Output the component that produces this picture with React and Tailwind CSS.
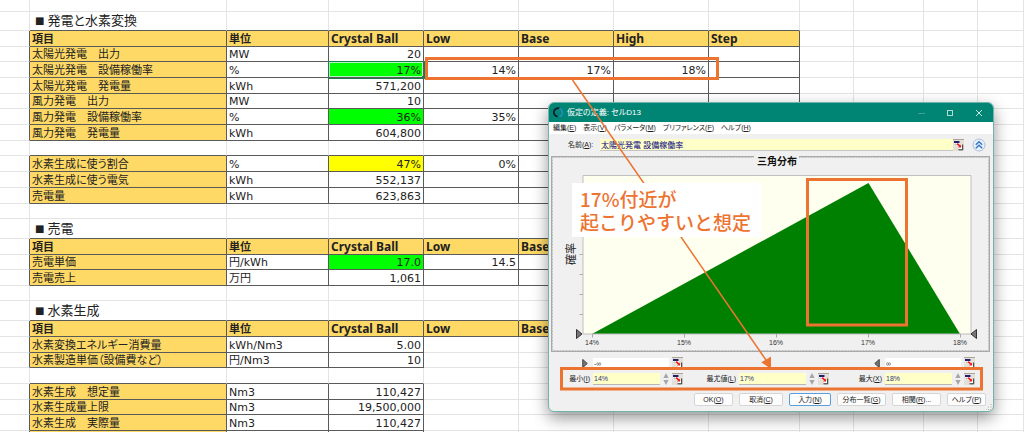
import React from "react";

const H15 = "h-[15px]";
const H16 = "h-[16px]";
const H20 = "h-[20px]";
const HEAD = ["項目", "単位", "Crystal Ball", "Low", "Base", "High", "Step"];

// boxed: number of columns, counted from the item column, that carry a dark frame
const ROWS = [
  { h: "h-[12px]" },
  { h: "h-[19px]", title: "発電と水素変換" },
  { h: H16, head: true, boxed: 7 },
  { h: H15, boxed: 7, cells: ["太陽光発電　出力", "MW", "20"] },
  { h: H16, boxed: 7, cells: ["太陽光発電　設備稼働率", "%", "17%", "14%", "17%", "18%"], fill: "green", selected: true },
  { h: H16, boxed: 7, cells: ["太陽光発電　発電量", "kWh", "571,200"] },
  { h: H15, boxed: 7, cells: ["風力発電　出力", "MW", "10"] },
  { h: H16, boxed: 7, cells: ["風力発電　設備稼働率", "%", "36%", "35%"], fill: "green" },
  { h: H16, boxed: 7, cells: ["風力発電　発電量", "kWh", "604,800"] },
  { h: H15 },
  { h: H16, boxed: 7, cells: ["水素生成に使う割合", "%", "47%", "0%"], fill: "yellow" },
  { h: H16, boxed: 7, cells: ["水素生成に使う電気", "kWh", "552,137"] },
  { h: H16, boxed: 7, cells: ["売電量", "kWh", "623,863"] },
  { h: H15 },
  { h: H20, title: "売電" },
  { h: H16, head: true, boxed: 7 },
  { h: H15, boxed: 7, cells: ["売電単価", "円/kWh", "17.0", "14.5"], fill: "green" },
  { h: H16, boxed: 7, cells: ["売電売上", "万円", "1,061"] },
  { h: H15 },
  { h: H20, title: "水素生成" },
  { h: H16, head: true, boxed: 7 },
  { h: H16, boxed: 3, cells: ["水素変換エネルギー消費量", "kWh/Nm3", "5.00"] },
  { h: H15, boxed: 3, cells: ["水素製造単価（設備費など）", "円/Nm3", "10"] },
  { h: H16 },
  { h: H16, boxed: 3, cells: ["水素生成　想定量", "Nm3", "110,427"] },
  { h: H15, boxed: 3, cells: ["水素生成量上限", "Nm3", "19,500,000"] },
  { h: H16, boxed: 3, cells: ["水素生成　実際量", "Nm3", "110,427"] },
  { h: H16, boxed: 3, cells: ["", "", ""] },
];

const COLS = [
  "w-[30px]", "w-[197px]", "w-[102px]", "w-[95px]", "w-[95px]", "w-[95px]",
  "w-[95px]", "w-[91px]", "w-[54px]", "w-[70px]", "w-[54px]", "",
];

const FILLS = { green: "bg-[#00ff00]", yellow: "bg-[#ffff00]" };

function isBoxed(row, col) {
  return Boolean(row && row.boxed) && col >= 1 && col <= row.boxed;
}

function Cell({ row, next, col }) {
  const self = isBoxed(row, col);
  const right = self || isBoxed(row, col + 1) ? "border-r-[#5a5a5a]" : "border-r-[#e4e4e4]";
  const bottom = self || isBoxed(next, col) ? "border-b-[#5a5a5a]" : "border-b-[#e4e4e4]";
  const base = `border-r border-b p-0 align-middle whitespace-nowrap ${right} ${bottom}`;

  if (row.title && col === 1) {
    return (
      <td className={`${base} pl-[5px]`}>
        <h2 className="flex items-center gap-[3px] text-[13px] leading-[18px]">
          <span className="text-[10px]">■</span>
          {row.title}
        </h2>
      </td>
    );
  }
  if (row.head && self) {
    const size = col <= 2 ? "text-[11px]" : "text-[12px]";
    return (
      <th scope="col" className={`${base} bg-[#ffd966] pl-[2px] text-left font-['Noto_Sans','Noto_Sans_CJK_JP',sans-serif] font-bold ${size}`}>
        {HEAD[col - 1]}
      </th>
    );
  }
  const text = row.cells && col >= 1 ? row.cells[col - 1] : undefined;
  if (self && col === 1) {
    return (
      <th scope="row" className={`${base} bg-[#ffd966] pt-px pl-[2px] text-left font-normal`}>
        {text}
      </th>
    );
  }
  if (self && col === 2) return <td className={`${base} pt-px pl-[2px]`}>{text}</td>;
  const fill = col === 3 && row.fill ? FILLS[row.fill] : "";
  if (col === 3 && row.selected) {
    return (
      <td className={`${base} ${fill} relative pt-px pr-[2px] text-right inset-ring inset-ring-[#b5f5c4] outline outline-1 outline-[#1f7a4d]`}>
        {text}
        <span className="absolute -right-[2px] -bottom-[2px] size-[3px] bg-[#1f7a4d]" />
      </td>
    );
  }
  return <td className={`${base} ${fill} ${self ? "pt-px" : ""} pr-[2px] text-right`}>{text}</td>;
}

function Sheet() {
  return (
    <table className="w-full table-fixed border-separate border-spacing-0 text-[11px] leading-[13px] text-[#222]">
      <colgroup>
        {COLS.map((w, i) => (
          <col key={i} className={w} />
        ))}
      </colgroup>
      <tbody>
        {ROWS.map((row, r) => (
          <tr key={r} className={row.h}>
            {COLS.map((_, c) => (
              <Cell key={c} row={row} next={ROWS[r + 1]} col={c} />
            ))}
          </tr>
        ))}
      </tbody>
    </table>
  );
}

function Key({ text, k, tail = "" }) {
  return (
    <>
      {text}(<u>{k}</u>){tail}
    </>
  );
}

function PickCell({ label }) {
  return (
    <button type="button" aria-label={label} className="h-[12px] w-[11px] shrink-0 border-t border-[#a8a49c] bg-[#e4e0d8]">
      <svg viewBox="0 0 11 11" className="h-[11px] w-[11px]">
        <rect x="1" y="1" width="5.5" height="5" fill="#fff" />
        <rect x="1" y="1" width="5.5" height="2" fill="#20206c" />
        <path d="M2.8 3v3M1 4.6h3.500" stroke="#b0b0b0" strokeWidth="0.6" />
        <rect x="6" y="7" width="4" height="2.600" fill="#fff" />
        <path d="M4.200 3.600L7 6.400" stroke="#f01818" strokeWidth="1.600" />
        <path d="M8 4.800v2.800H5.200z" fill="#f01818" />
        <path d="M9.700 4.500v5.300H5.500" fill="none" stroke="#2b2b2b" strokeWidth="1" />
      </svg>
    </button>
  );
}

function Spinner({ label }) {
  return (
    <span className="flex w-[6px] shrink-0 flex-col gap-[2px]">
      <button type="button" aria-label={`${label} +`} className="block">
        <svg viewBox="0 0 6 5" className="block h-[5px] w-[6px]"><path d="M3 0L5.6 5H.4z" fill="#a6a6a6" /></svg>
      </button>
      <button type="button" aria-label={`${label} -`} className="block">
        <svg viewBox="0 0 6 5" className="block h-[5px] w-[6px]"><path d="M3 5L5.6 0H.4z" fill="#a6a6a6" /></svg>
      </button>
    </span>
  );
}

function Param({ id, text, k, value }) {
  return (
    <div className="flex w-[134px] items-center">
      <label htmlFor={id} className="mr-[3px] w-[41px] text-right whitespace-nowrap"><Key text={text} k={k} /></label>
      <input id={id} defaultValue={value} className="mr-[3px] h-[12px] w-[67px] border-b border-[#b8b8b8] bg-[#ffffc8] px-px text-[#33337a] outline-none" />
      <Spinner label={text} />
      <span className="ml-[3px] flex"><PickCell label={text} /></span>
    </div>
  );
}

function Bound({ label, value, flip }) {
  return (
    <div className="flex w-[134px] items-center">
      <span className="mr-[5px] flex w-[39px] justify-end">
        <svg viewBox="0 0 6 10" className="h-[9px] w-[6px]">
          <path d={flip ? "M5.5.5v9L.5 5z" : "M.5.5v9L5.5 5z"} fill="#777" stroke="#333" strokeWidth="1" />
        </svg>
      </span>
      <input aria-label={label} defaultValue={value} className="mr-[3px] h-[11px] w-[76px] bg-white px-px text-[#333] outline-none" />
      <PickCell label={label} />
    </div>
  );
}

const TICKS = [
  [41, "14%"], [133, "15%"], [225, "16%"], [317, "17%"], [409, "18%"],
];

function Chart() {
  return (
    <svg viewBox="0 0 439 196" className="block h-[196px] w-[439px]" role="img" aria-label="三角分布">
      <rect x="0.5" y="0.5" width="438" height="195" fill="none" stroke="#a9a9a9" />
      <rect x="1.5" y="1.5" width="436" height="193" fill="none" stroke="#bdbdbd" strokeDasharray="2 1" />
      <rect x="203" y="0" width="45" height="3" fill="#f0f0f0" />
      <text x="226" y="9" fontSize="10" fontWeight="700" textAnchor="middle" fill="#111">三角分布</text>
      <rect x="32" y="19.5" width="388" height="158.5" fill="#fffff0" />
      <path d="M32 178V19.5H420V178" fill="none" stroke="#c0c0c0" />
      <path d="M41 178L317.5 27L409 178z" fill="#008000" />
      <path d="M32 178H420" stroke="#bdbdbd" />
      {[38, 58, 78, 98, 118, 138, 158].map((y) => (
        <path key={y} d={`M28.5 ${y + 0.5}H32`} stroke="#b0b0b0" />
      ))}
      {TICKS.map(([x, label]) => (
        <g key={label}>
          <path d={`M${x + 0.5} 178v3.5`} stroke="#a8a8a8" />
          <text x={x} y="189" fontSize="7" textAnchor="middle" fill="#333">{label}</text>
        </g>
      ))}
      <text transform="translate(24 98) rotate(-90)" fontSize="11" textAnchor="middle" fill="#222">確率</text>
      <path d="M25.5 173.5v9L31 178z" fill="#777" stroke="#333" />
      <path d="M425.5 173.5v9L420 178z" fill="#777" stroke="#333" />
    </svg>
  );
}

const BTN = "h-[13px] rounded-[2px] border bg-[#fdfdfd] text-center leading-[11px] whitespace-nowrap";

function Dialog() {
  return (
    <section
      aria-label="仮定の定義: セルD13"
      className="absolute top-[102px] left-[548px] w-[446px] overflow-hidden rounded-[6px] border border-[#6fb5ad] bg-[#f0f0f0] font-['Liberation_Sans','Noto_Sans_CJK_JP',sans-serif] text-[7px] leading-[10px] text-[#222] shadow-[0_6px_16px_rgba(0,0,0,0.42)]"
    >
      <header className="flex h-[19px] items-center bg-[#008575] text-white">
        <svg viewBox="0 0 12 12" className="ml-[4px] h-[11px] w-[11px]">
          <path d="M7 1.600A4.500 4.500 0 1 0 5 10.300" fill="none" stroke="#07192b" strokeWidth="2" />
          <path d="M7 1.600A4.600 4.600 0 0 1 7 10.400" fill="none" stroke="#2f8fd0" strokeWidth="1.300" />
        </svg>
        <h1 className="ml-[3px] flex-1 text-[8px]">仮定の定義: セルD13</h1>
        <div className="flex items-center gap-[15px] pr-[7px]">
          <button type="button" aria-label="最小化" disabled>
            <svg viewBox="0 0 14 14" className="block h-[14px] w-[14px]"><path d="M4 7.500h7" stroke="#3f9f94" /></svg>
          </button>
          <button type="button" aria-label="最大化">
            <svg viewBox="0 0 14 14" className="block h-[14px] w-[14px]"><rect x="4.500" y="4.500" width="5" height="5" fill="none" stroke="#b5dbd6" /></svg>
          </button>
          <button type="button" aria-label="閉じる">
            <svg viewBox="0 0 14 14" className="block h-[14px] w-[14px]"><path d="M4 4l6 6M10 4l-6 6" stroke="#e5f3f1" strokeWidth="0.900" /></svg>
          </button>
        </div>
      </header>
      <nav className="flex h-[12px] items-center gap-[7px] bg-white pl-[4px]">
        <button type="button"><Key text="編集" k="E" /></button>
        <button type="button"><Key text="表示" k="V" /></button>
        <button type="button"><Key text="パラメータ" k="M" /></button>
        <button type="button"><Key text="プリファレンス" k="F" /></button>
        <button type="button"><Key text="ヘルプ" k="H" /></button>
      </nav>
      <div className="flex h-[22px] items-center pr-[7px] pl-[19px]">
        <label htmlFor="assumption" className="w-[32px]"><Key text="名前" k="A" tail=":" /></label>
        <input id="assumption" defaultValue="太陽光発電 設備稼働率" className="h-[12px] min-w-0 flex-1 border-b border-[#c4c4c4] bg-[#ffffc8] px-px text-[8px] text-[#000080] outline-none" />
        <PickCell label="セルの選択" />
        <button type="button" aria-label="折りたたむ" className="ml-[8px]">
          <svg viewBox="0 0 14 14" className="block h-[14px] w-[14px]">
            <circle cx="7" cy="7" r="6" fill="#e9f1fb" stroke="#a9bfdc" />
            <path d="M3.800 6.800L7 3.700l3.200 3.100M3.800 10.300L7 7.200l3.200 3.100" fill="none" stroke="#3b78c8" strokeWidth="1.500" />
          </svg>
        </button>
      </div>
      <div className="pl-[2px]"><Chart /></div>
      <div className="flex justify-between pt-[5px] pr-[18px]">
        <Bound label="下限" value="-∞" />
        <Bound label="上限" value="∞" flip />
      </div>
      <div className="flex justify-between pt-[4px] pr-[18px]">
        <Param id="min" text="最小" k="I" value="14%" />
        <Param id="mode" text="最尤値" k="L" value="17%" />
        <Param id="max" text="最大" k="X" value="18%" />
      </div>
      <div className="flex justify-end gap-[6px] pt-[8px] pr-[7px] pb-[5px]">
        <button type="button" className={`${BTN} w-[39px] border-[#d6d6d6]`}><Key text="OK" k="O" /></button>
        <button type="button" className={`${BTN} w-[44px] border-[#d6d6d6]`}><Key text="取消" k="C" /></button>
        <button type="button" className={`${BTN} w-[42px] border-[#5a9fdc]`}><Key text="入力" k="N" /></button>
        <button type="button" className={`${BTN} w-[49px] border-[#d6d6d6]`}><Key text="分布一覧" k="G" /></button>
        <button type="button" className={`${BTN} w-[49px] border-[#d6d6d6]`}><Key text="相関" k="R" tail="..." /></button>
        <button type="button" className={`${BTN} w-[39px] border-[#d6d6d6]`}><Key text="ヘルプ" k="P" /></button>
      </div>
      <svg viewBox="0 0 6 6" className="absolute right-[1px] bottom-[1px] h-[6px] w-[6px]">
        <path d="M5 0v1M5 2.500v1M5 5v1M2.500 2.500v1M2.500 5v1M0 5v1" stroke="#aaa" />
      </svg>
    </section>
  );
}

function Annotations() {
  return (
    <>
      <svg viewBox="0 0 1024 432" className="pointer-events-none absolute top-0 left-0 h-[432px] w-[1024px]" aria-hidden="true">
        <g fill="none" stroke="#ed7331">
          <rect x="426.5" y="58.5" width="291" height="20" strokeWidth="3" />
          <rect x="807.5" y="179.5" width="99" height="145.5" strokeWidth="3" />
          <rect x="561.5" y="368.5" width="420" height="20.5" strokeWidth="3" />
          <path d="M572.5 80L766 360" strokeWidth="1.5" />
        </g>
        <path d="M771 369L761.3 362.3L771 356.5z" fill="#ed7331" />
      </svg>
      <p className="absolute top-[183px] left-[572px] bg-white py-[4px] pr-[10px] pl-[8px] font-['Noto_Sans_CJK_JP',sans-serif] text-[19px] leading-[23px] font-medium whitespace-nowrap text-[#ed7331] [font-feature-settings:normal]">
        17%付近が
        <br />
        起こりやすいと想定
      </p>
    </>
  );
}

export default function App() {
  return (
    <main
      lang="ja"
      className="relative h-screen overflow-hidden bg-white font-['DejaVu_Sans','Noto_Sans_CJK_JP',sans-serif] [font-feature-settings:'palt']"
    >
      <Sheet />
      <Dialog />
      <Annotations />
    </main>
  );
}
